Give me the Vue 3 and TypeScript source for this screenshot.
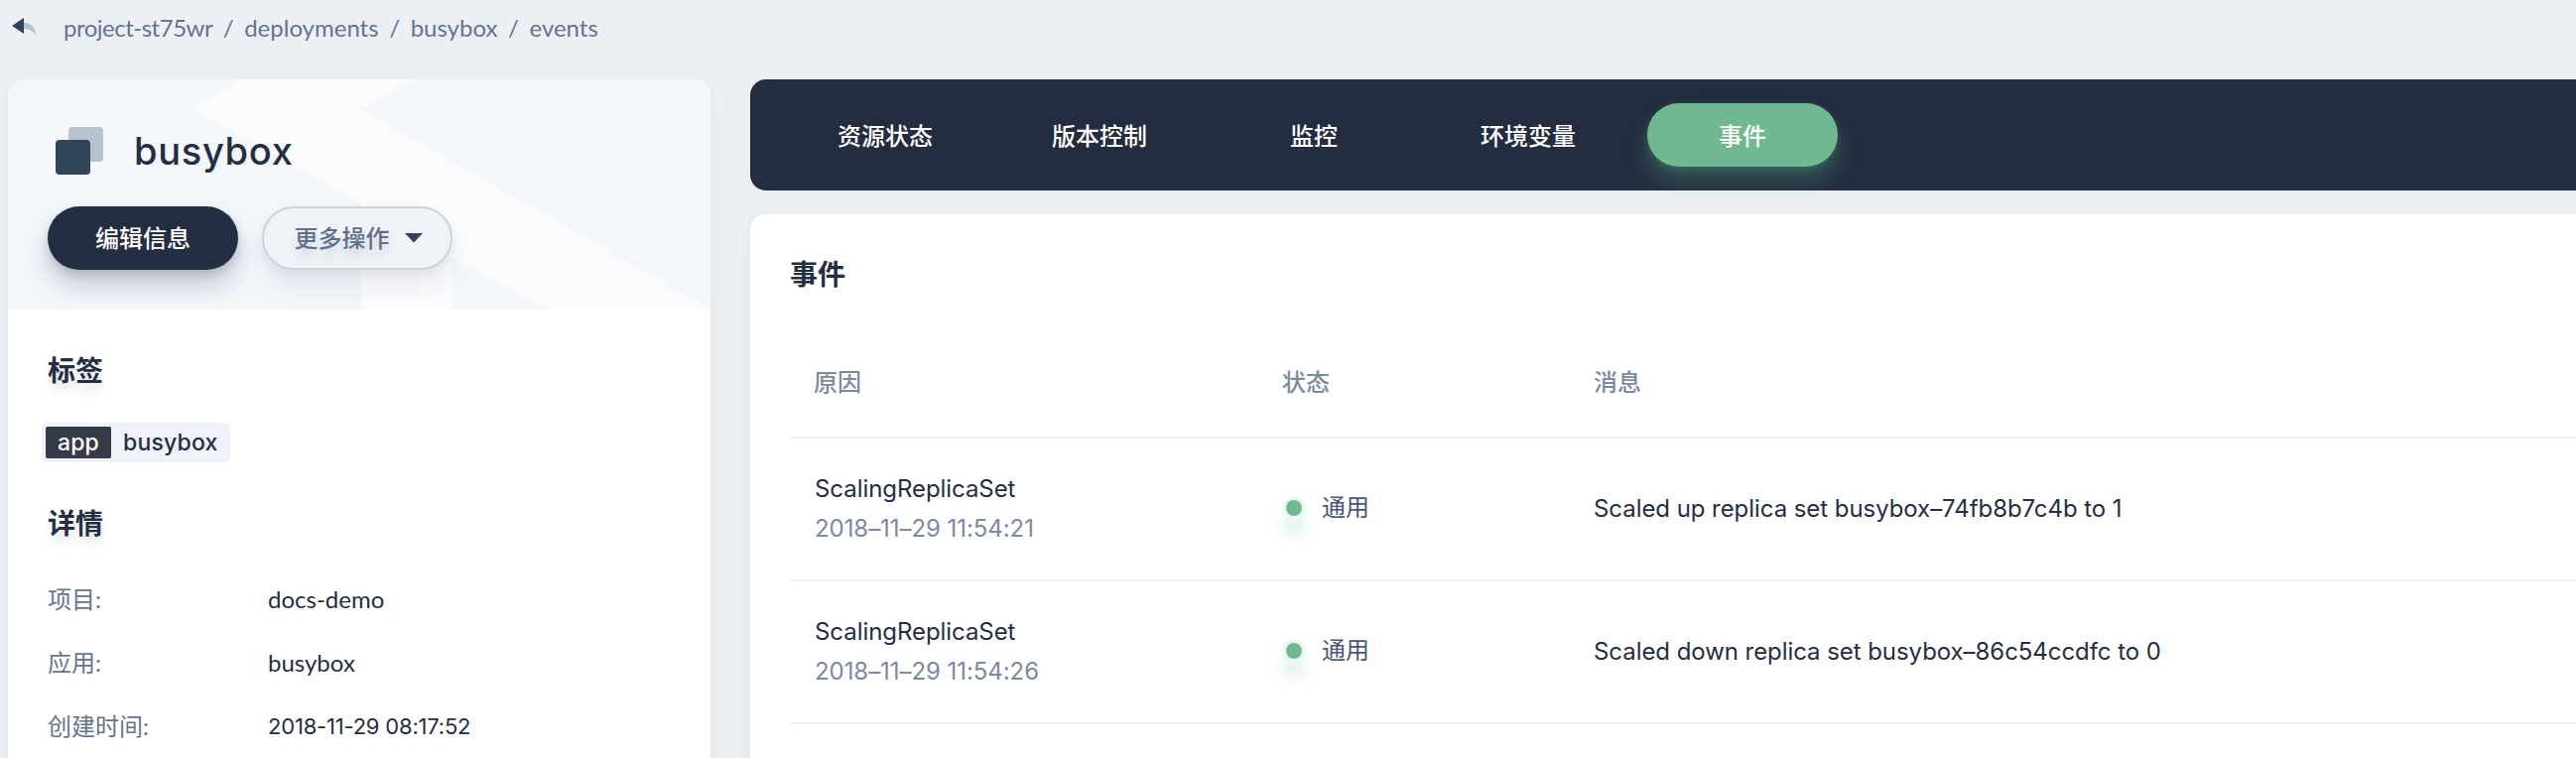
<script setup lang="ts">
interface EventRow {
  reason: string
  time: string
  status: string
  message: string
}

const crumbs: string[] = ['project-st75wr', 'deployments', 'busybox', 'events']

const tabs: string[] = ['资源状态', '版本控制', '监控', '环境变量', '事件']
const activeTab = '事件'

const details: { label: string; value: string; numeric?: boolean }[] = [
  { label: '项目:', value: 'docs-demo' },
  { label: '应用:', value: 'busybox' },
  { label: '创建时间:', value: '2018-11-29 08:17:52', numeric: true },
]

const events: EventRow[] = [
  {
    reason: 'ScalingReplicaSet',
    time: '2018–11–29 11:54:21',
    status: '通用',
    message: 'Scaled up replica set busybox–74fb8b7c4b to 1',
  },
  {
    reason: 'ScalingReplicaSet',
    time: '2018–11–29 11:54:26',
    status: '通用',
    message: 'Scaled down replica set busybox–86c54ccdfc to 0',
  },
]
</script>

<template>
  <div class="page">
    <nav class="crumbs">
      <svg class="back" viewBox="0 0 24 20" width="24" height="20">
        <path d="M11 5.5C18.5 5.5 23.6 10 23.9 18.6C21 13.6 17 12 11 12Z" fill="#b6c2cd" />
        <path d="M0 9L12 1V17Z" fill="#324558" />
      </svg>
      <template v-for="(crumb, i) in crumbs" :key="crumb">
        <span v-if="i > 0" class="slash">/</span>
        <a class="crumb" :class="{ tight: i === 0 }">{{ crumb }}</a>
      </template>
    </nav>

    <div class="columns">
      <aside class="card side">
        <header class="hero">
          <svg class="hero-bg" viewBox="0 0 708 232" width="708" height="232">
            <path
              d="M235 0H408L356 30.5L708 232H542L447.500 179.500V232H356V125.500L185.500 29Z"
              fill="#fafbfd"
            />
          </svg>
          <div class="name-row">
            <svg class="app-icon" viewBox="0 0 48 48" width="48" height="48">
              <rect x="13" y="0" width="35" height="35" rx="4" fill="#b6c2cd" />
              <rect x="0" y="13" width="35" height="35" rx="4" fill="#324558" />
            </svg>
            <h1 class="name">busybox</h1>
          </div>
          <div class="actions">
            <button class="btn primary">编辑信息</button>
            <button class="btn more">
              <span>更多操作</span>
              <svg viewBox="0 0 18 10" width="18" height="10"><path d="M0 0H18L9 9.500Z" fill="#324558" /></svg>
            </button>
          </div>
        </header>
        <div class="side-body">
          <h2 class="heading">标签</h2>
          <div class="tag">
            <span class="tag-key">app</span>
            <span class="tag-value">busybox</span>
          </div>
          <h2 class="heading">详情</h2>
          <dl class="details">
            <div v-for="d in details" :key="d.label" class="detail">
              <dt>{{ d.label }}</dt>
              <dd :class="{ numeric: d.numeric }">{{ d.value }}</dd>
            </div>
          </dl>
        </div>
      </aside>

      <main class="main">
        <nav class="tabs">
          <a v-for="tab in tabs" :key="tab" class="tab" :class="{ active: tab === activeTab }">{{ tab }}</a>
        </nav>
        <section class="card panel">
          <h2 class="panel-title">事件</h2>
          <div class="row head">
            <span>原因</span>
            <span>状态</span>
            <span>消息</span>
          </div>
          <div v-for="e in events" :key="e.time" class="row item">
            <div class="reason">
              <p>{{ e.reason }}</p>
              <p class="reason-time">{{ e.time }}</p>
            </div>
            <div class="status">
              <i class="dot"></i>
              <span>{{ e.status }}</span>
            </div>
            <p>{{ e.message }}</p>
          </div>
        </section>
      </main>
    </div>
  </div>
</template>

<style>
body {
  background: #ecf0f5;
  overflow: hidden;
}
</style>

<style scoped>
.page {
  height: 764px;
  overflow: hidden;
  background: #ecf0f5;
  color: #242e42;
  font-family: Lato, 'Noto Sans CJK SC', sans-serif;
  font-size: 24px;
}
h1,
h2,
p,
dl,
dd {
  margin: 0;
}
.crumbs {
  display: flex;
  align-items: center;
  height: 54px;
  padding-left: 12px;
  color: #65748f;
  white-space: nowrap;
}
.back {
  margin-right: 28px;
}
.crumb.tight {
  letter-spacing: -0.5px;
}
.slash {
  width: 32px;
  text-align: center;
}
.columns {
  display: flex;
  align-items: flex-start;
  gap: 40px;
  padding: 26px 0 0 8px;
}
.card {
  border-radius: 16px;
  background: #fff;
  box-shadow: 0 8px 16px rgba(36, 46, 66, 0.06);
}
.side {
  flex: none;
  width: 708px;
  height: 760px;
}
.hero {
  position: relative;
  box-sizing: border-box;
  height: 232px;
  padding: 48px 40px 0;
  border-radius: 16px 16px 0 0;
  overflow: hidden;
  background: #f3f6fb;
}
.hero-bg {
  position: absolute;
  top: 0;
  left: 0;
}
.name-row {
  position: relative;
  display: flex;
  align-items: center;
  height: 48px;
  padding-left: 8px;
}
.name {
  margin-left: 31px;
  font: 500 38px/48px Inter, sans-serif;
  letter-spacing: 0.7px;
}
.actions {
  position: relative;
  display: flex;
  gap: 24px;
  margin-top: 32px;
}
.btn {
  display: flex;
  align-items: center;
  justify-content: center;
  box-sizing: border-box;
  width: 192px;
  height: 64px;
  padding: 0;
  border: 0;
  border-radius: 32px;
  font: 500 24px/36px Lato, 'Noto Sans CJK SC', sans-serif;
}
.primary {
  background: #242e42;
  color: #fff;
  box-shadow: 0 16px 24px rgba(36, 46, 66, 0.22), 0 4px 8px rgba(36, 46, 66, 0.16);
}
.more {
  gap: 15px;
  padding-left: 2px;
  border: 2px solid #ccd3db;
  background: #eff2f7;
  color: #5f708a;
  text-shadow: 0 8px 8px rgba(36, 46, 66, 0.12);
  box-shadow: 0 16px 24px rgba(36, 46, 66, 0.08), 0 4px 8px rgba(36, 46, 66, 0.06);
}
.side-body {
  padding: 41px 40px 0;
}
.heading {
  font: 600 28px/40px Lato, 'Noto Sans CJK SC', sans-serif;
  text-shadow: 0 8px 8px rgba(36, 46, 66, 0.12);
}
.tag {
  display: flex;
  align-items: center;
  box-sizing: border-box;
  width: 190px;
  height: 40px;
  margin: 33px 0 41px -6px;
  padding-left: 4px;
  border-radius: 5px;
  background: #eff3f9;
  font: 500 23px/32px Inter, sans-serif;
  letter-spacing: 0.2px;
}
.tag-key {
  width: 66px;
  border-radius: 2px;
  background: #363b49;
  color: #fff;
  text-align: center;
}
.tag-value {
  margin-left: 12px;
}
.details {
  margin-top: 25px;
}
.detail {
  display: grid;
  grid-template-columns: 222px 1fr;
  line-height: 64px;
}
.detail dt {
  color: #65748f;
}
.numeric {
  font-family: Inter, sans-serif;
  font-size: 22px;
  letter-spacing: -0.2px;
}
.main {
  flex: 1;
}
.tabs {
  display: flex;
  align-items: center;
  gap: 24px;
  box-sizing: border-box;
  height: 112px;
  margin-bottom: 24px;
  padding-left: 40px;
  border-radius: 16px 0 0 16px;
  background: #242d40;
}
.tab {
  box-sizing: border-box;
  width: 192px;
  height: 64px;
  padding-top: 1px;
  border-radius: 32px;
  color: #fff;
  font-weight: 500;
  line-height: 63px;
  text-align: center;
}
.tab.active {
  background: #70b88f;
  box-shadow: 0 16px 24px rgba(85, 188, 138, 0.26), 0 4px 8px rgba(85, 188, 138, 0.2);
}
.panel {
  box-sizing: border-box;
  height: 620px;
  padding: 40px 0 0 40px;
  border-radius: 16px 0 0 16px;
}
.panel-title {
  font: 600 28px/40px Lato, 'Noto Sans CJK SC', sans-serif;
}
.row {
  display: grid;
  grid-template-columns: 472px 314px 1fr;
  align-items: center;
  box-sizing: border-box;
  padding-left: 24px;
  border-bottom: 2px solid #eff2f7;
}
.head {
  height: 146px;
  padding-top: 34px;
  color: #7b8aa1;
  font-weight: 500;
  line-height: 36px;
}
.item {
  height: 144px;
  font-family: Inter, 'Noto Sans CJK SC', sans-serif;
  letter-spacing: -0.06px;
  line-height: 40px;
  white-space: nowrap;
}
.reason {
  padding-left: 1px;
}
.reason-time {
  color: #7b8aa1;
}
.status {
  display: flex;
  align-items: center;
  gap: 20px;
  padding: 0 0 2px 4px;
  color: #4a5674;
}
.dot {
  width: 16px;
  height: 16px;
  border-radius: 50%;
  background: #70b88f;
  box-shadow: 0 0 0 4px #edf7f1, 0 16px 16px 4px rgba(85, 188, 138, 0.2);
}
</style>
